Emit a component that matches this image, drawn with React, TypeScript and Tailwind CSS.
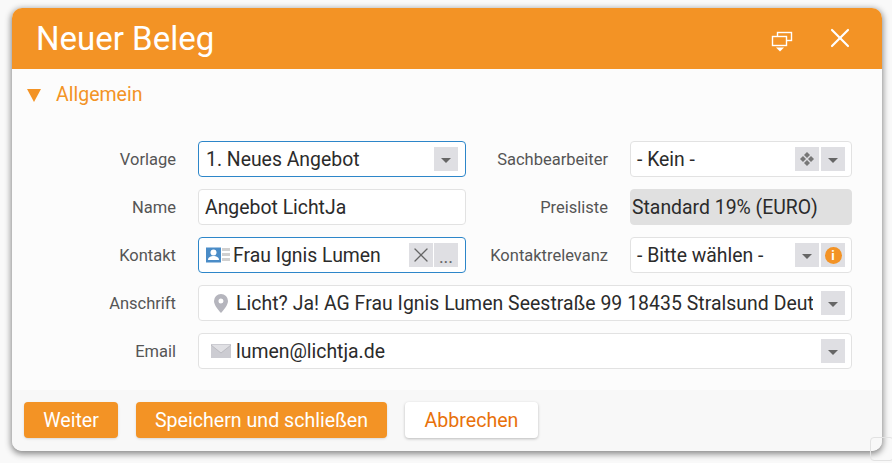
import { X } from 'lucide-react';

function Arrow() {
  return (
    <span className="flex h-6 w-6 shrink-0 items-center justify-center bg-[#dfdfe3]">
      <span className="mt-0.5 h-0 w-0 border-x-[5px] border-t-[5px] border-x-transparent border-t-[#666]" />
    </span>
  );
}

function IconBtn({ children }: { children: React.ReactNode }) {
  return <span className="flex h-6 w-6 shrink-0 items-center justify-center bg-[#dfdfe3] text-[#666]">{children}</span>;
}

function Label({ children, wide }: { children: React.ReactNode; wide?: boolean }) {
  return (
    <div className={`${wide ? 'w-[142px]' : 'w-[164px]'} shrink-0 pt-[2px] text-right text-[16.5px] text-[#555]`}>{children}</div>
  );
}

function Field({
  children,
  focused,
  disabled,
  width,
  className = '',
}: {
  children: React.ReactNode;
  focused?: boolean;
  disabled?: boolean;
  width: string;
  className?: string;
}) {
  return (
    <div
      className={`flex h-9 items-center rounded border text-[19.4px] text-[#2b2b2b] ${
        focused ? 'border-[#2d86c9]' : disabled ? 'border-[#e0e0e0]' : 'border-[#e2e2e2]'
      } ${disabled ? 'bg-[#e0e0e0]' : 'bg-white'} ${width} ${className}`}
    >
      {children}
    </div>
  );
}

function ContactIcon() {
  return (
    <svg width="24" height="16" viewBox="0 0 24 16" className="shrink-0">
      <rect width="15" height="15" y="0.5" fill="#4a8cc7" />
      <circle cx="7.5" cy="5.5" r="3" fill="#fff" />
      <path d="M2 13c0-3 3-4 5.5-4s5.5 1 5.5 4z" fill="#fff" />
      <rect x="16" y="1" width="8" height="3" fill="#d0d0d0" />
      <rect x="16" y="6" width="8" height="3" fill="#d0d0d0" />
      <rect x="16" y="11" width="8" height="3" fill="#d0d0d0" />
    </svg>
  );
}

function PinIcon() {
  return (
    <svg width="14" height="19" viewBox="0 0 14 19" className="shrink-0">
      <path
        fillRule="evenodd"
        d="M7 0a7 7 0 0 1 7 7c0 4-4 8.500-7 12C4 15.500 0 11 0 7a7 7 0 0 1 7-7zm0 4.500a2.500 2.500 0 1 0 0 5 2.500 2.500 0 0 0 0-5z"
        fill="#b5b5bd"
      />
    </svg>
  );
}

function MailIcon() {
  return (
    <svg width="20" height="14" viewBox="0 0 20 14" className="shrink-0">
      <rect width="20" height="14" fill="#ccccd2" />
      <path d="M0 1l10 8 10-8" fill="#e0e0e4" stroke="#b5b5bb" strokeWidth="0.8" />
    </svg>
  );
}

function WindowsIcon() {
  return (
    <svg width="22" height="22" viewBox="0 0 22 22" fill="none" stroke="#fff" strokeWidth="1.4" className="mt-[6px]">
      <rect x="6.500" y="1.500" width="14" height="8" />
      <rect x="1.500" y="5.500" width="14" height="9" fill="#f39325" />
      <path d="M5 16.500h8l-4 4z" fill="#fff" stroke="none" />
    </svg>
  );
}

function MoveIcon() {
  return (
    <svg width="16" height="16" viewBox="0 0 16 16" fill="#777">
      <path d="M8 1l3 3-3 3-3-3z" />
      <path d="M8 9l3 3-3 3-3-3z" />
      <path d="M4 5l3 3-3 3-3-3z" />
      <path d="M12 5l3 3-3 3-3-3z" />
    </svg>
  );
}

export default function App() {
  return (
    <div className="relative h-[463px] w-[892px] overflow-hidden bg-[#f9f9f9] font-['Roboto',sans-serif]">
      <div className="absolute left-[12px] top-[8px] flex h-[443px] w-[870px] flex-col overflow-hidden rounded-[10px] bg-[#fcfcfc] shadow-[0_2px_6px_1px_rgba(0,0,0,0.45)]">
        <div className="flex h-[61px] shrink-0 items-center justify-between bg-[#f39325] pl-[24px] pr-[26px] text-white">
          <h1 className="text-[33px] leading-none">Neuer Beleg</h1>
          <div className="flex items-center gap-[31px]">
            <WindowsIcon />
            <X size={32} strokeWidth={1.6} className="mb-[2px]" />
          </div>
        </div>

        <div className="flex items-center gap-[15px] pl-[15px] pt-[14px] text-[19.5px] leading-[24px] text-[#f39325]">
          <span className="h-0 w-0 border-x-[7px] border-t-[13px] border-x-transparent border-t-[#f39325]" />
          <span>Allgemein</span>
        </div>

        <div className="mt-[34px] flex flex-col gap-3">
          <div className="flex items-center">
            <Label>Vorlage</Label>
            <Field focused width="w-[268px]" className="ml-[22px] pl-[7px] pr-[7px]">
              <span className="flex-1 pt-[2px]">1. Neues Angebot</span>
              <Arrow />
            </Field>
            <Label wide>Sachbearbeiter</Label>
            <Field width="w-[222px]" className="ml-[22px] gap-[2px] pl-[6px] pr-[6px]">
              <span className="flex-1 pt-[2px]">- Kein -</span>
              <IconBtn><MoveIcon /></IconBtn>
              <Arrow />
            </Field>
          </div>

          <div className="flex items-center">
            <Label>Name</Label>
            <Field width="w-[268px]" className="ml-[22px] pl-[6px]">
              <span className="pt-[2px]">Angebot LichtJa</span>
            </Field>
            <Label wide>Preisliste</Label>
            <Field disabled width="w-[222px]" className="ml-[22px] pl-[1px]">
              <span className="pt-[2px]">Standard 19% (EURO)</span>
            </Field>
          </div>

          <div className="flex items-center">
            <Label>Kontakt</Label>
            <Field focused width="w-[268px]" className="ml-[22px] gap-[3px] pl-[7px] pr-[7px]">
              <ContactIcon />
              <span className="flex-1 whitespace-nowrap pt-[2px]">Frau Ignis Lumen</span>
              <div className="flex gap-px">
                <IconBtn><X size={24} strokeWidth={1.3} /></IconBtn>
                <IconBtn><span className="mt-1 text-[18px] leading-none">...</span></IconBtn>
              </div>
            </Field>
            <Label wide>Kontaktrelevanz</Label>
            <Field width="w-[222px]" className="ml-[22px] gap-[2px] pl-[6px] pr-[6px]">
              <span className="flex-1 whitespace-nowrap pt-[2px]">- Bitte wählen -</span>
              <Arrow />
              <IconBtn>
                <span className="flex h-[17px] w-[17px] items-center justify-center rounded-full bg-[#f39325] text-[13px] font-bold leading-none text-white">i</span>
              </IconBtn>
            </Field>
          </div>

          <div className="flex items-center">
            <Label>Anschrift</Label>
            <Field width="w-[654px]" className="ml-[22px] pl-[15px] pr-[6px]">
              <PinIcon />
              <span className="ml-[8px] w-[577px] shrink-0 overflow-hidden whitespace-nowrap pt-[2px] tracking-[0.05px]">Licht? Ja! AG Frau Ignis Lumen Seestraße 99 18435 Stralsund Deutschland</span>
              <span className="ml-auto shrink-0"><Arrow /></span>
            </Field>
          </div>

          <div className="flex items-center">
            <Label>Email</Label>
            <Field width="w-[654px]" className="ml-[22px] pl-[12px] pr-[6px]">
              <MailIcon />
              <span className="ml-[5px] flex-1 pt-[2px]">lumen@lichtja.de</span>
              <Arrow />
            </Field>
          </div>
        </div>

        <div className="mt-[21px] flex flex-1 items-start gap-[18px] bg-[#f8f8f8] pl-[12px] pt-[12px] text-[19.6px]">
          <button className="h-9 w-[94px] rounded bg-[#f39325] pt-[2px] text-white shadow-sm">Weiter</button>
          <button className="h-9 w-[251px] rounded bg-[#f39325] pt-[2px] text-white shadow-sm">Speichern und schließen</button>
          <button className="h-9 w-[133px] rounded bg-white pt-[2px] text-[#e8710a] shadow-[0_1px_3px_rgba(0,0,0,0.25)]">Abbrechen</button>
        </div>
      </div>
      <div className="absolute left-[870px] top-[437px] h-[24px] w-[24px] rounded-[4px] border border-[#e2e2e2]" />
    </div>
  );
}
